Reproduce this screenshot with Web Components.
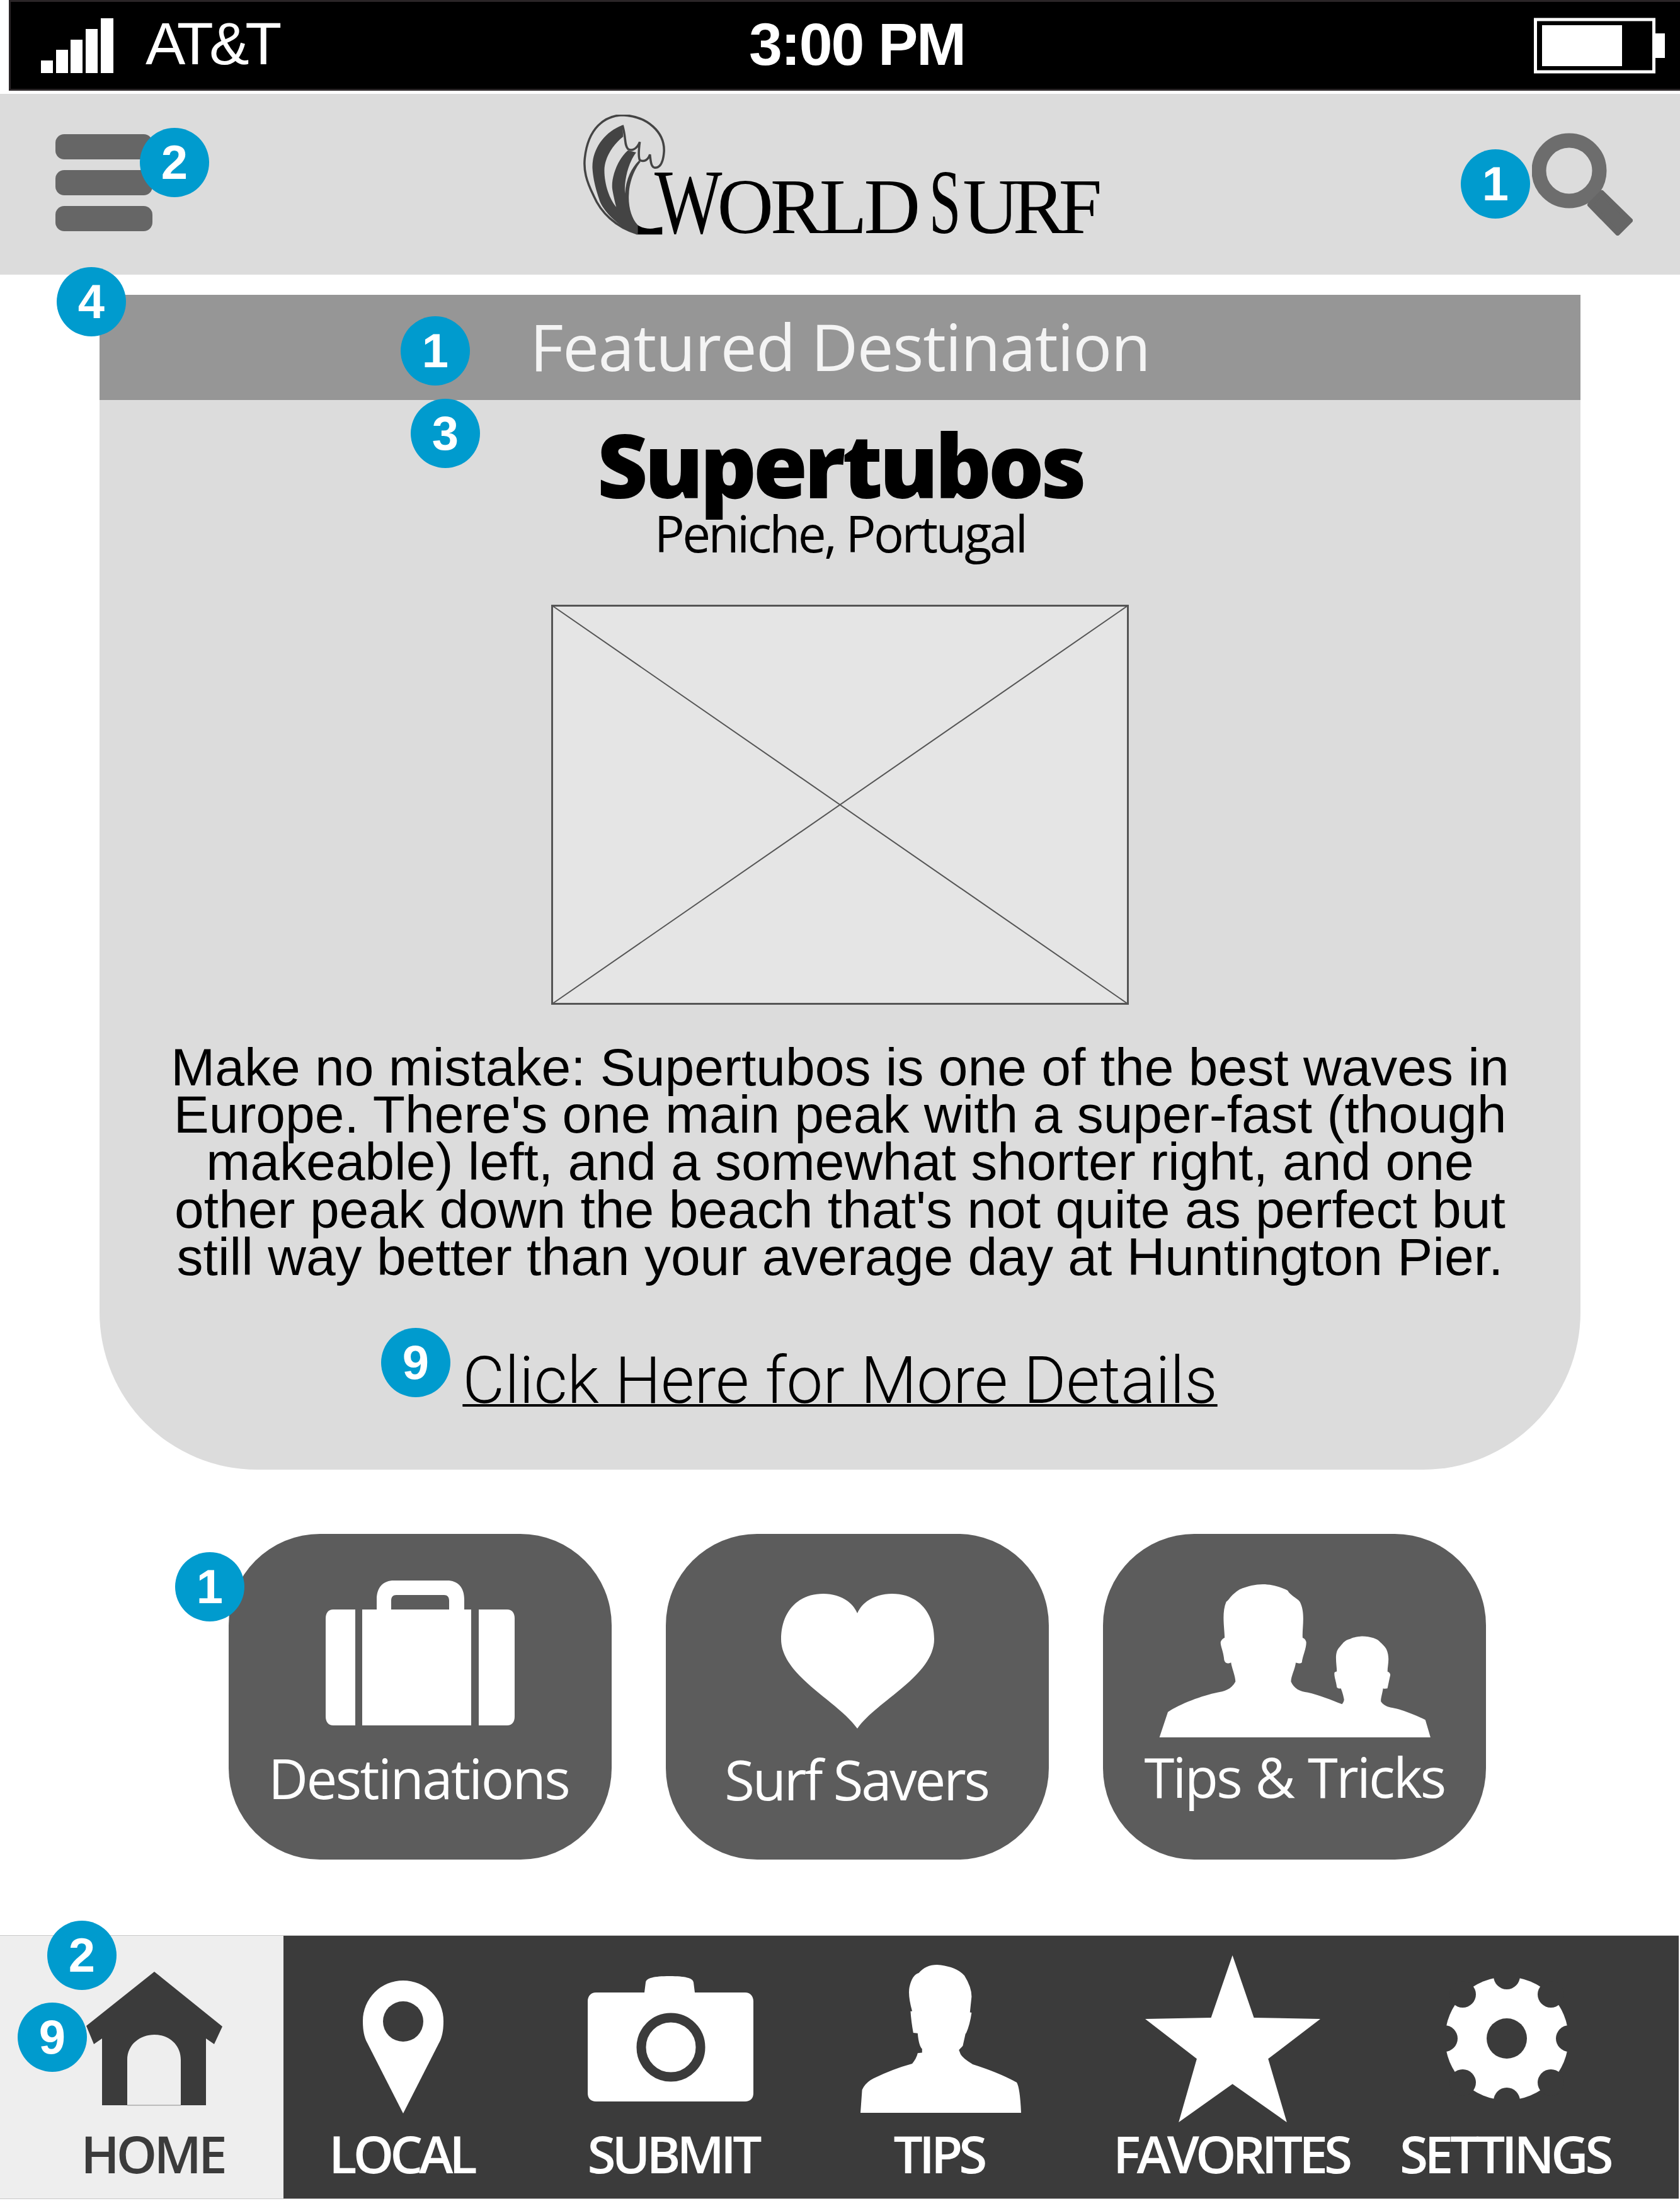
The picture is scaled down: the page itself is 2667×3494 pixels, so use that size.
<!DOCTYPE html>
<html>
<head>
<meta charset="utf-8">
<title>World Surf</title>
<style>
  html, body { margin: 0; padding: 0; background: #fff; }
  body { width: 2667px; height: 3494px; overflow: hidden; font-family: "Open Sans", sans-serif; }
  svg { display: block; }
</style>
</head>
<body>

<status-bar carrier="AT&amp;T" time="3:00 PM"></status-bar>

<app-header>
  <note-badge n="2" x="222" y="54"></note-badge>
  <note-badge n="1" x="2319" y="88"></note-badge>
</app-header>

<featured-card heading="Featured Destination" name="Supertubos" place="Peniche, Portugal" link="Click Here for More Details">
  Make no mistake: Supertubos is one of the best waves in<br>
  Europe. There's one main peak with a super-fast (though<br>
  makeable) left, and a somewhat shorter right, and one<br>
  other peak down the beach that's not quite as perfect but<br>
  still way better than your average day at Huntington Pier.
  <note-badge n="4" x="-68" y="-44"></note-badge>
  <note-badge n="1" x="478" y="34"></note-badge>
  <note-badge n="3" x="494" y="165"></note-badge>
  <note-badge n="9" x="447" y="1640"></note-badge>
</featured-card>

<tile-row>
  <menu-tile label="Destinations" top="74" track="-2.6" trim="5">
    <svg width="300" height="230" viewBox="0 0 300 230" fill="#fff">
      <path d="M81 46V30C81 10 92 0 108 0H193C209 0 220 10 220 30V46H196V32C196 26 193 23 188 23H112C107 23 104 26 104 32V46Z"/>
      <path d="M47 46V230H12C4 230 0 224 0 216V60C0 52 4 46 12 46Z"/>
      <rect x="58" y="46" width="173" height="184"/>
      <path d="M243 46V230H288C296 230 300 224 300 216V60C300 52 296 46 288 46Z"/>
    </svg>
  </menu-tile>
  <menu-tile label="Surf Savers" top="95" lift="-2" track="-3.2" trim="3">
    <svg width="243" height="214" viewBox="0 0 243 214" fill="#fff">
      <path d="M121 31C112 10 90 0 67 0C25 0 0 30 0 72C0 130 90 170 121 214C152 170 243 130 243 72C243 30 218 0 176 0C153 0 130 10 121 31Z"/>
    </svg>
  </menu-tile>
  <menu-tile label="Tips &amp; Tricks" top="80" lift="2" track="-2.8" spread="3" trim="0">
    <svg width="431" height="243" viewBox="690 322 675 681" preserveAspectRatio="none" fill="#fff">
      <path d="M691 1003L712 890C740 855 800 815 835 803C850 800 870 790 880 755C880 730 870 690 869 670C860 676 855 675 852 660C850 620 843 600 843 580C845 565 853 560 853 560C853 520 845 450 857 400C865 390 868 370 890 345C910 330 930 322 948 322C970 322 995 335 1010 350C1015 370 1035 385 1040 400C1055 450 1045 520 1047 560C1055 565 1056 580 1056 580C1056 610 1047 640 1045 670C1040 678 1030 670 1030 670C1028 700 1018 730 1018 755C1025 785 1040 800 1060 803C1085 812 1120 838 1145 855C1150 845 1150 835 1150 835C1148 810 1142 785 1142 785C1135 788 1132 780 1132 780C1130 750 1125 735 1126 715C1128 710 1132 710 1132 710C1132 680 1125 630 1137 605C1145 590 1150 570 1165 565C1175 555 1195 553 1195 553C1215 553 1235 565 1240 580C1250 595 1255 610 1255 610C1265 650 1258 680 1258 710C1265 715 1265 725 1265 725C1262 750 1258 785 1258 785C1250 788 1247 785 1247 785C1245 810 1240 835 1242 845C1250 865 1265 870 1265 870C1290 875 1335 910 1352 925C1358 960 1365 1003 1365 1003Z"/>
    </svg>
  </menu-tile>
  <note-badge n="1" x="278" y="29"></note-badge>
</tile-row>

<tab-bar>
  <tab-item label="HOME" width="450" pad="40" track="-5" active>
    <svg width="216" height="213" viewBox="0 0 216 213" fill="#3b3b3b">
      <path d="M108 0L216 87L203 115L190 106V212H150V140C150 115 130 100 108 100C86 100 65 115 65 140V212H25V106L12 115L0 86Z"/>
      <rect x="65" y="211" width="85" height="2" fill="#bbb"/>
    </svg>
  </tab-item>
  <tab-item label="LOCAL" width="380" shift="26">
    <svg width="128" height="211" viewBox="0 0 128 211">
      <path fill="#fff" d="M64 211L5 95C1 85 0 75 0 64A64 64 0 0 1 128 64C128 75 127 85 123 95Z"/>
      <circle cx="64" cy="65" r="32" fill="#3b3b3b"/>
    </svg>
  </tab-item>
  <tab-item label="SUBMIT" width="482" nudge="14">
    <svg width="263" height="199" viewBox="0 0 263 199">
      <path fill="#fff" d="M13 26H90L92 10C93 3 105 0 130 0C155 0 167 3 168 10L170 26H250C258 26 263 32 263 40V186C263 194 258 199 250 199H13C5 199 0 194 0 186V40C0 32 5 26 13 26Z"/>
      <circle cx="132" cy="113" r="47" fill="none" stroke="#3b3b3b" stroke-width="15"/>
    </svg>
  </tab-item>
  <tab-item label="TIPS" width="362">
    <svg width="255" height="235" viewBox="76 233 292 707" preserveAspectRatio="none" fill="#fff">
      <path d="M76 940L79 830Q85 795 100 775Q135 730 170 705Q178 680 180 655L188 653L188 635Q182 620 180 560L172 558Q168 500 167 455L170 455Q162 380 165 340Q170 280 182 272Q195 233 215 233Q250 240 265 285Q278 340 278 385L275 460L278 462Q275 520 268 560L267 562L262 620L255 640L258 660Q262 680 280 708Q330 750 360 795Q366 820 368 940Z"/>
    </svg>
  </tab-item>
  <tab-item label="FAVORITES" width="566">
    <svg width="278" height="265" viewBox="593 190 319 795" preserveAspectRatio="none" fill="#fff">
      <path d="M752 190L791 487L912 493L817 683L851 985L752 803L654 985L687 683L593 493L713 487Z"/>
    </svg>
  </tab-item>
  <tab-item label="SETTINGS" width="304" track="-5.4">
    <svg width="198" height="198" viewBox="-99 -99 198 198">
      <circle r="98" fill="#fff"/>
      <g fill="#3b3b3b">
        <circle cx="0" cy="-99" r="21"/><circle cx="70" cy="-70" r="21"/>
        <circle cx="99" cy="0" r="21"/><circle cx="70" cy="70" r="21"/>
        <circle cx="0" cy="99" r="21"/><circle cx="-70" cy="70" r="21"/>
        <circle cx="-99" cy="0" r="21"/><circle cx="-70" cy="-70" r="21"/>
        <circle r="32"/>
      </g>
    </svg>
  </tab-item>
  <note-badge n="2" x="75" y="-24"></note-badge>
  <note-badge n="9" x="28" y="106"></note-badge>
</tab-bar>

<script>
class NoteBadge extends HTMLElement{
    constructor(){
        super();
        this.shadowDOM = this.attachShadow({mode:"open"});
    }

    connectedCallback(){
        this.style.left = this.getAttribute("x") + "px";
        this.style.top = this.getAttribute("y") + "px";
        this.shadowDOM.innerHTML = `<style>
    :host {
        position: absolute;
        display: flex;
        align-items: center;
        justify-content: center;
        width: 110px;
        height: 110px;
        border-radius: 50%;
        background: #009bce;
        color: #fff;
        font: 700 76px/1 "Liberation Sans", Arial, sans-serif;
    }
</style>${this.getAttribute("n")}`;
    }
}

class StatusBar extends HTMLElement{
    constructor(){
        super();
        this.shadowDOM = this.attachShadow({mode:"open"});
    }

    connectedCallback(){
        let bars = [[0,67,19],[24,50,19],[47,34,19],[71,17,19],[95,0,20]]
            .map(b => `<rect x="${b[0]}" y="${b[1]}" width="${b[2]}" height="${87 - b[1]}"/>`).join("");
        this.shadowDOM.innerHTML = `<style>
    :host {
        display: flex;
        align-items: center;
        box-sizing: border-box;
        height: 144px;
        margin-left: 14px;
        padding: 0 24px 0 48px;
        background: #000;
        border: solid #2a2527;
        border-width: 3px 0 3px 3px;
        color: #fff;
        font: 400 95px/1 "Liberation Sans", Arial, sans-serif;
    }
    .left {
        display: flex;
        align-items: center;
        width: 1124px;
    }
    .carrier {
        margin-left: 51px;
        margin-top: -6px;
        letter-spacing: -6.5px;
    }
    .time {
        margin-top: -4px;
        font-weight: 700;
        letter-spacing: -2.3px;
    }
    .battery {
        margin-left: auto;
    }
    svg { display: block; }
</style>
<div class="left">
    <svg width="115" height="87" viewBox="0 0 115 87" fill="#fff">${bars}</svg>
    <div class="carrier">${this.getAttribute("carrier").replace("&","&amp;")}</div>
</div>
<div class="time">${this.getAttribute("time")}</div>
<svg class="battery" width="208" height="89" viewBox="0 0 208 89" fill="#fff">
    <rect x="2.5" y="3" width="188" height="83" fill="none" stroke="#fff" stroke-width="5"/>
    <rect x="13" y="12" width="127" height="65"/>
    <rect x="193" y="25" width="15" height="39"/>
</svg>`;
    }
}

class AppHeader extends HTMLElement{
    constructor(){
        super();
        this.shadowDOM = this.attachShadow({mode:"open"});
    }

    connectedCallback(){
        this.shadowDOM.innerHTML = `<style>
    :host {
        position: relative;
        display: grid;
        grid-template-columns: 1fr auto 1fr;
        align-items: center;
        box-sizing: border-box;
        height: 287px;
        margin-top: 5px;
        padding: 0 75px 0 88px;
        background: #dcdcdc;
    }
    .menu {
        display: flex;
        flex-direction: column;
        gap: 17px;
        width: 154px;
        margin-top: -5px;
    }
    .menu i {
        display: block;
        height: 40px;
        border-radius: 14px;
        background: #666;
    }
    .logo {
        display: flex;
        align-items: flex-end;
        margin-top: -29px;
        margin-right: 16px;
        color: #000;
        font: 400 124px/1 "Liberation Serif", "Times New Roman", serif;
    }
    .words {
        margin-left: -18px;
        margin-bottom: -20px;
        white-space: nowrap;
        word-spacing: -12px;
    }
    .words span { display: inline-block; }
    .cap {
        font-size: 146px;
        transform-origin: left bottom;
    }
    .w { transform: scaleX(.78); margin-right: -38px; }
    .s { transform: scaleX(.62); margin-right: -28px; }
    .lo { letter-spacing: -5px; }
    .hi { letter-spacing: -10px; }
    .search { justify-self: end; }
</style>
<div class="menu"><i></i><i></i><i></i></div>
<div class="logo">
    <svg width="132" height="192" viewBox="70 65 230 576" preserveAspectRatio="none">
        <path fill="none" stroke="#444" stroke-width="3.5" vector-effect="non-scaling-stroke" d="M222 632C160 600 120 530 100 450C80 380 72 330 76 270C85 130 130 70 180 67C250 72 297 150 295 240C293 290 285 318 270 318C258 315 258 280 256 255C250 285 238 290 228 282C222 260 228 195 228 195C220 230 205 240 195 228C185 210 190 170 180 115"/>
        <path fill="#444" d="M180 115C125 150 95 240 97 320C100 400 115 460 118 480C130 530 175 610 222 632L222 590C205 560 195 500 198 440C200 380 215 320 230 290L225 285C205 320 190 370 187 440C185 400 190 310 218 245L195 235C165 280 148 370 152 420C155 450 160 490 163 505C145 470 130 400 130 330C130 270 155 205 182 170Z"/>
        <path fill="#000" d="M222 590C232 605 255 612 270 605L290 600L290 636L222 636Z"/>
    </svg>
    <div class="words"><span class="cap w">W</span><span class="lo">ORLD</span> <span class="cap s">S</span><span class="hi">URF</span></div>
</div>
<svg class="search" width="160" height="163" viewBox="0 0 160 163">
    <circle cx="59" cy="60" r="48" fill="none" stroke="#6d6d6d" stroke-width="23"/>
    <path fill="#666" stroke="#666" stroke-width="8" stroke-linejoin="round" d="M111 95L92 114L136 159L156 139Z"/>
</svg>
<slot></slot>`;
    }
}

class FeaturedCard extends HTMLElement{
    constructor(){
        super();
        this.shadowDOM = this.attachShadow({mode:"open"});
    }

    connectedCallback(){
        this.shadowDOM.innerHTML = `<style>
    :host {
        position: relative;
        display: block;
        box-sizing: border-box;
        height: 1865px;
        margin: 32px 158px 0;
        background: #dcdcdc;
        border-radius: 0 0 250px 250px;
        text-align: center;
        color: #000;
    }
    .heading {
        height: 167px;
        background: #969696;
        color: #f4f4f4;
        font: 400 103px/163px "Open Sans", sans-serif;
        letter-spacing: -1.3px;
    }
    .name {
        margin-top: 42px;
        font: 800 140px/120px "Open Sans", sans-serif;
        letter-spacing: -5.5px;
    }
    .place {
        margin-top: 4px;
        font: 400 80px/90px "Open Sans", sans-serif;
        letter-spacing: -3.6px;
    }
    .photo {
        display: block;
        margin: 69px auto 0;
    }
    .text {
        margin-top: 62px;
        font: 400 84px/75.2px "Liberation Sans", Arial, sans-serif;
    }
    .more {
        display: inline-block;
        margin-top: 99px;
        font: 300 103px/120px Roboto, sans-serif;
        color: #000;
        text-decoration: underline;
        text-decoration-thickness: 4px;
    }
</style>
<div class="heading">${this.getAttribute("heading")}</div>
<div class="name">${this.getAttribute("name")}</div>
<div class="place">${this.getAttribute("place")}</div>
<svg class="photo" width="917" height="635" viewBox="0 0 917 635">
    <rect x="1.5" y="1.5" width="914" height="632" fill="#e5e5e5" stroke="#555" stroke-width="3"/>
    <path d="M1 1L916 634M916 1L1 634" stroke="#555" stroke-width="2" fill="none"/>
</svg>
<div class="text"><slot></slot></div>
<div class="more">${this.getAttribute("link")}</div>`;
    }
}

class TileRow extends HTMLElement{
    constructor(){
        super();
        this.shadowDOM = this.attachShadow({mode:"open"});
    }

    connectedCallback(){
        this.shadowDOM.innerHTML = `<style>
    :host {
        position: relative;
        display: flex;
        gap: 86px;
        margin-top: 102px;
        padding-left: 363px;
    }
</style><slot></slot>`;
    }
}

class MenuTile extends HTMLElement{
    constructor(){
        super();
        this.shadowDOM = this.attachShadow({mode:"open"});
    }

    connectedCallback(){
        let lift = this.getAttribute("lift") || 0;
        this.shadowDOM.innerHTML = `<style>
    :host {
        display: block;
        box-sizing: border-box;
        width: 608px;
        height: 517px;
        border-radius: 145px;
        background: #5c5c5c;
        color: #fff;
        text-align: center;
    }
    .art {
        display: flex;
        justify-content: center;
        height: 337px;
        box-sizing: border-box;
        padding-top: ${this.getAttribute("top")}px;
    }
    .label {
        position: relative;
        top: ${-lift}px;
        padding-right: ${this.getAttribute("trim")}px;
        font: 400 87px/100px "Open Sans", sans-serif;
        letter-spacing: ${this.getAttribute("track")}px;
        word-spacing: ${this.getAttribute("spread") || 0}px;
    }
</style>
<div class="art"><slot></slot></div>
<div class="label">${this.getAttribute("label").replace("&","&amp;")}</div>`;
    }
}

class TabBar extends HTMLElement{
    constructor(){
        super();
        this.shadowDOM = this.attachShadow({mode:"open"});
    }

    connectedCallback(){
        this.shadowDOM.innerHTML = `<style>
    :host {
        position: relative;
        display: flex;
        box-sizing: border-box;
        height: 419px;
        width: 2665px;
        margin-top: 120px;
        background: #3b3b3b;
        border: solid #c9c9c9;
        border-width: 1px 0;
    }
</style><slot></slot>`;
    }
}

class TabItem extends HTMLElement{
    constructor(){
        super();
        this.shadowDOM = this.attachShadow({mode:"open"});
    }

    connectedCallback(){
        let active = this.hasAttribute("active");
        let pad = this.getAttribute("pad") || 0;
        this.shadowDOM.innerHTML = `<style>
    :host {
        display: block;
        box-sizing: border-box;
        width: ${this.getAttribute("width")}px;
        padding-left: ${pad}px;
        background: ${active ? "#eee" : "transparent"};
        color: ${active ? "#3b3b3b" : "#fff"};
    }
    .art {
        display: flex;
        align-items: center;
        justify-content: center;
        box-sizing: border-box;
        height: 326px;
        padding-top: ${this.getAttribute("shift") || 0}px;
        padding-right: ${this.getAttribute("nudge") || 0}px;
    }
    .label {
        display: flex;
        justify-content: center;
        margin-top: -26px;
        padding-right: 6px;
        font: 600 82px/90px "Open Sans", sans-serif;
        letter-spacing: ${this.getAttribute("track") || -6}px;
        white-space: nowrap;
    }
</style>
<div class="art"><slot></slot></div>
<div class="label">${this.getAttribute("label")}</div>`;
    }
}

customElements.define('note-badge',NoteBadge);
customElements.define('status-bar',StatusBar);
customElements.define('app-header',AppHeader);
customElements.define('featured-card',FeaturedCard);
customElements.define('tile-row',TileRow);
customElements.define('menu-tile',MenuTile);
customElements.define('tab-bar',TabBar);
customElements.define('tab-item',TabItem);
</script>
</body>
</html>
